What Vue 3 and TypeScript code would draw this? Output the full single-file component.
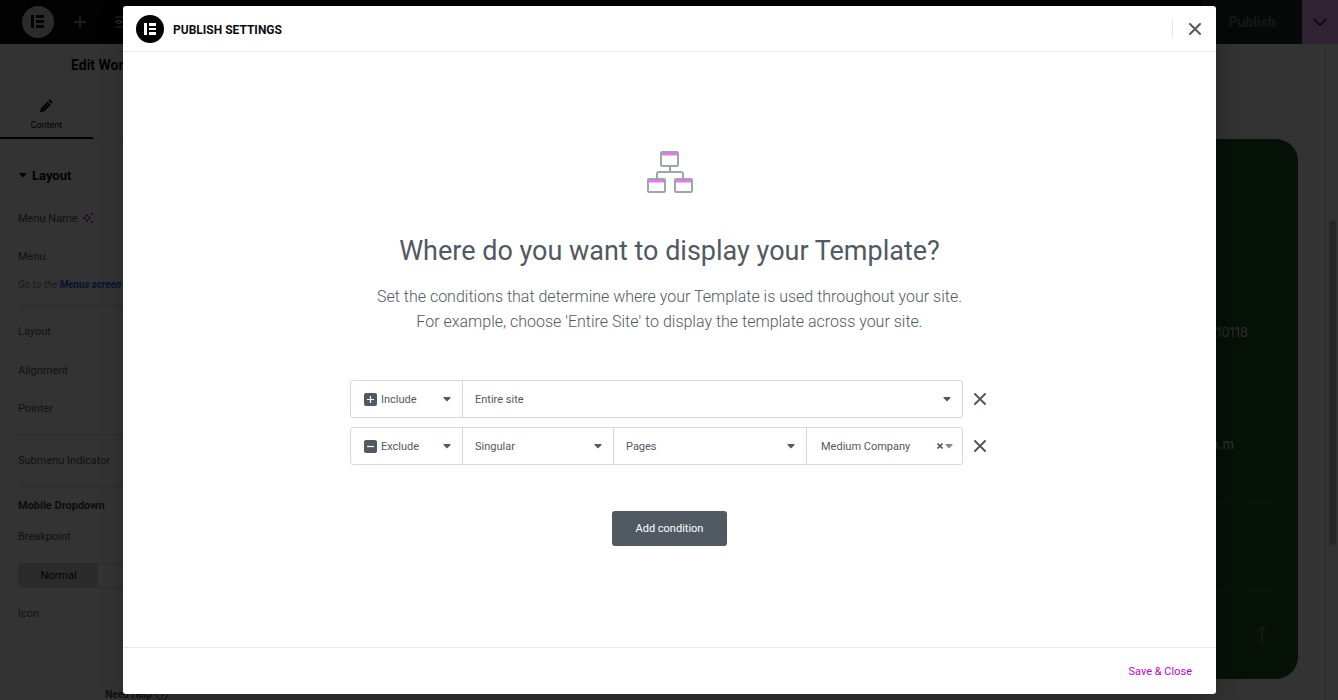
<script setup lang="ts">
import { ref } from 'vue'

interface Field {
  label: string
  options: string[]
  size: string
  clearable?: boolean
}
interface Condition {
  id: number
  kind: 'Include' | 'Exclude'
  fields: Field[]
}

const conditions = ref<Condition[]>([
  {
    id: 1,
    kind: 'Include',
    fields: [{ label: 'Scope', options: ['Entire site', 'Archives', 'Singular'], size: 'wide' }],
  },
  {
    id: 2,
    kind: 'Exclude',
    fields: [
      { label: 'Scope', options: ['Singular', 'Archives', 'Entire site'], size: 'small' },
      { label: 'Content type', options: ['Pages', 'Posts'], size: 'medium' },
      { label: 'Item', options: ['Medium Company'], size: 'item', clearable: true },
    ],
  },
])

let nextId = 3
function addCondition() {
  conditions.value.push({
    id: nextId++,
    kind: 'Include',
    fields: [{ label: 'Scope', options: ['Entire site', 'Archives', 'Singular'], size: 'wide' }],
  })
}
function removeCondition(id: number) {
  conditions.value = conditions.value.filter((c) => c.id !== id)
}
</script>

<template>
  <div class="app">
    <div class="editor">
      <header class="topbar">
        <div class="tools">
          <button class="brand" aria-label="Menu">
            <svg viewBox="0 0 32 32" width="32" height="32">
              <circle cx="16" cy="16" r="16" fill="#d5d8dc" />
              <path d="M9 9h3v13H9zM14 9h8v3h-8zM14 14h8v3h-8zM14 19h8v3h-8z" fill="#0c0d0e" />
            </svg>
          </button>
          <button aria-label="Add element">
            <svg viewBox="0 0 14 14" width="14" height="14" stroke="#babfc5" stroke-width="1.3"><path d="M7 1v12M1 7h12" /></svg>
          </button>
          <button class="site" aria-label="Site settings">
            <svg viewBox="0 0 14 14" width="14" height="14" fill="none" stroke="#babfc5" stroke-width="1.2">
              <path d="M0 2h8M12 2h2M0 7h2M6 7h8M0 12h8M12 12h2" /><circle cx="10" cy="2" r="1.7" /><circle cx="4" cy="7" r="1.7" /><circle cx="10" cy="12" r="1.7" />
            </svg>
          </button>
        </div>
        <div class="publish">
          <button class="publish-main">Publish</button>
          <button class="publish-more" aria-label="Save options">
            <svg viewBox="0 0 14 8" width="14" height="8" fill="none" stroke="#000" stroke-width="1.3"><path d="M1 1l6 6 6-6" /></svg>
          </button>
        </div>
      </header>

      <div class="workspace">
        <aside class="panel">
          <h2 class="panel-title">Edit WordPress Menu</h2>
          <nav class="tabs">
            <button class="tab active">
              <svg viewBox="0 0 14 14" width="14" height="14">
                <path d="M1 13l1-4 6.500-6.500 3.500 3.500L5 12.500zM9.200 1.800l.8-.8q1-.8 2 0l1 1q.8 1 0 2l-.8.8z" fill="#0c0d0e" />
                <path d="M4 10l5-5" stroke="#fff" stroke-width=".5" />
              </svg>
              <span>Content</span>
            </button>
            <button class="tab"><span>Style</span></button>
            <button class="tab"><span>Advanced</span></button>
          </nav>
          <section class="controls">
            <h3 class="section-title">
              <svg viewBox="0 0 8 5" width="8" height="5"><path d="M1 0h6q1 .3.5 1L4 4.500.5 1Q0 .3 1 0z" fill="#0c0d0e" /></svg>Layout
            </h3>
            <div class="row">
              Menu Name
              <svg viewBox="0 0 12 12" width="12" height="12" fill="none" stroke="#c00bb9">
                <path d="M5 2l1.200 2.800L9 6 6.200 7.200 5 10 3.800 7.200 1 6l2.800-1.200z" stroke-width="1" />
                <path d="M10 1v2M9 2h2M10 9v2M9 10h2" stroke-width="1" />
              </svg>
            </div>
            <div class="row">Menu</div>
            <p class="hint">Go to the <a href="#menus">Menus screen</a> to manage your menus.</p>
            <hr />
            <div class="row first">Layout</div>
            <div class="row">Alignment</div>
            <div class="row">Pointer</div>
            <hr />
            <div class="row first">Submenu Indicator</div>
            <hr class="tight" />
            <div class="row strong">Mobile Dropdown</div>
            <div class="row short">Breakpoint</div>
            <div class="segments"><button class="on">Normal</button><button></button></div>
            <div class="row">Icon</div>
          </section>
          <a class="help" href="#help">
            Need Help
            <svg viewBox="0 0 12 12" width="12" height="12" fill="none" stroke="#3f444b">
              <circle cx="6" cy="6" r="5.300" /><path d="M4.500 5q0-1.700 1.500-1.700T7.500 5Q7.500 5.800 6 6.500V7.500M6 8.500v1" />
            </svg>
          </a>
        </aside>
        <main class="canvas">
          <div class="card">
            <p class="address">New York, NY 10118</p>
            <p class="hours">9 a.m - 6 p.m</p>
            <hr />
            <hr class="second" />
            <svg class="up" viewBox="0 0 10 17" width="10" height="17" fill="none" stroke="#c9a13a"><path d="M5 17V1M1 5l4-4 4 4" /></svg>
          </div>
          <div class="scroll"><div class="thumb"></div></div>
        </main>
      </div>
    </div>

    <div class="overlay">
      <div class="dialog" role="dialog" aria-modal="true" aria-labelledby="dialog-title">
        <header class="dialog-head">
          <svg viewBox="0 0 28 28" width="28" height="28">
            <circle cx="14" cy="14" r="14" fill="#000" />
            <path d="M8 8h3v12H8zM13 8h7v3h-7zM13 13h7v2h-7zM13 17h7v3h-7z" fill="#fff" />
          </svg>
          <h1 id="dialog-title">PUBLISH SETTINGS</h1>
          <button class="close" aria-label="Close">
            <svg viewBox="0 0 12 12" width="12" height="12" stroke="#515962" stroke-width="2" stroke-linecap="round"><path d="M1 1l10 10M11 1L1 11" /></svg>
          </button>
        </header>

        <div class="dialog-body">
          <svg class="hero" viewBox="0 0 46 43" width="46" height="43" fill="none" stroke="#9da5ae" stroke-width="2">
            <path d="M15 3h16M2 30h15M29 30h15" stroke="#ed73f5" stroke-width="3" />
            <rect x="14" y="1" width="17" height="14" rx="1" />
            <rect x="1" y="28" width="17" height="13" rx="1" />
            <rect x="28" y="28" width="17" height="13" rx="1" />
            <path d="M23 15v6M10 28v-5q0-2 2-2h22q2 0 2 2v5" />
          </svg>
          <h2>Where do you want to display your Template?</h2>
          <p class="lead">
            Set the conditions that determine where your Template is used throughout your site.<br />
            For example, choose 'Entire Site' to display the template across your site.
          </p>

          <div class="conditions">
            <div v-for="c in conditions" :key="c.id" class="condition">
              <div class="fields">
                <div class="field kind">
                  <svg viewBox="0 0 13 13" width="13" height="13">
                    <rect width="13" height="13" rx="2" fill="#515962" />
                    <path :d="c.kind === 'Include' ? 'M3 6.500h7M6.500 3v7' : 'M3 6.500h7'" stroke="#fff" stroke-width="1.200" />
                  </svg>
                  <select v-model="c.kind" aria-label="Condition type">
                    <option>Include</option>
                    <option>Exclude</option>
                  </select>
                  <svg class="arrow" viewBox="0 0 8 5" width="8" height="5"><path d="M1 0h6q1 .3.5 1L4 4.500.5 1Q0 .3 1 0z" /></svg>
                </div>
                <div v-for="f in c.fields" :key="f.label" class="field" :class="f.size">
                  <select :aria-label="f.label">
                    <option v-for="o in f.options" :key="o">{{ o }}</option>
                  </select>
                  <button v-if="f.clearable" class="clear" aria-label="Clear">
                    <svg viewBox="0 0 6 6" width="6" height="6" stroke="#515962" stroke-width="1.600"><path d="M.5.5l5 5M5.500.5l-5 5" /></svg>
                  </button>
                  <svg class="arrow" viewBox="0 0 8 5" width="8" height="5"><path d="M1 0h6q1 .3.5 1L4 4.500.5 1Q0 .3 1 0z" /></svg>
                </div>
              </div>
              <button class="remove" aria-label="Remove condition" @click="removeCondition(c.id)">
                <svg viewBox="0 0 12 12" width="12" height="12" stroke="#515962" stroke-width="2" stroke-linecap="round"><path d="M1 1l10 10M11 1L1 11" /></svg>
              </button>
            </div>
          </div>

          <button class="add" @click="addCondition">Add condition</button>
        </div>

        <footer class="dialog-foot"><button class="save">Save &amp; Close</button></footer>
      </div>
    </div>
  </div>
</template>

<style>
body {
  overflow: hidden;
}
</style>

<style scoped>
.app {
  position: relative;
  height: 100vh;
  overflow: hidden;
  font-family: Roboto, "Liberation Sans", sans-serif;
  font-size: 11px;
  color: #515962;
}
.app *,
.app {
  box-sizing: border-box;
}
button,
select {
  font: inherit;
  color: inherit;
  background: none;
  border: 0;
  padding: 0;
  margin: 0;
}
svg {
  display: block;
  flex: none;
}
h1,
h2,
h3,
p {
  margin: 0;
}
hr {
  margin: 0;
  border: 0;
  border-top: 1px solid #d5d8dc;
}
.editor {
  display: flex;
  flex-direction: column;
  height: 100%;
}
.topbar {
  display: flex;
  justify-content: space-between;
  height: 44px;
  background: #0c0d0e;
}
.tools {
  display: flex;
  align-items: center;
  gap: 20px;
  padding-left: 22px;
}
.brand {
  margin-right: -1px;
}
.site {
  margin-left: 8px;
}
.publish {
  display: flex;
}
.publish-main {
  width: 100px;
  background: #262829;
  color: #69727d;
  font-size: 14px;
  font-weight: 700;
}
.publish-more {
  display: grid;
  place-items: center;
  width: 36px;
  background: #f0abfc;
}
.workspace {
  flex: 1;
  display: flex;
  min-height: 0;
}
.panel {
  display: flex;
  flex-direction: column;
  width: 278px;
  background: #fff;
}
.panel-title {
  height: 43px;
  line-height: 43px;
  padding-left: 71px;
  border-bottom: 1px solid #f1f2f3;
  font-size: 14px;
  font-weight: 700;
  color: #0c0d0e;
}
.tabs {
  display: flex;
  height: 53px;
  border-bottom: 1px solid #e6e8ea;
}
.tab {
  flex: 1;
  display: flex;
  flex-direction: column;
  align-items: center;
  justify-content: center;
  gap: 7px;
  padding-top: 5px;
  font-size: 9px;
}
.tab.active {
  border-bottom: 2px solid #0c0d0e;
  color: #0c0d0e;
}
.controls {
  flex: 1;
  padding-left: 18px;
}
.section-title {
  display: flex;
  align-items: center;
  gap: 5px;
  height: 60px;
  margin-top: 5px;
  padding-left: 1px;
  font-size: 13px;
  font-weight: 700;
  color: #0c0d0e;
}
.row {
  display: flex;
  align-items: center;
  gap: 4px;
  height: 38px;
}
.section-title + .row {
  margin-top: -6px;
}
.row.first {
  height: 39px;
  margin-top: 6px;
}
.row + hr {
  margin-top: 7px;
}
.row + .tight {
  margin-top: 6px;
}
.hint {
  height: 30px;
  line-height: 20px;
  font-size: 10px;
  font-style: italic;
  white-space: nowrap;
  color: #818a96;
}
.hint a {
  color: #2563eb;
  font-weight: 700;
  text-decoration: none;
}
.row.strong {
  height: 36px;
  font-weight: 700;
  color: #3f444b;
}
.row.short {
  height: 27px;
}
.segments {
  display: flex;
  height: 25px;
  width: 160px;
  margin: 13px 0 6px;
  border: 1px solid #d5d8dc;
  border-radius: 3px;
}
.segments button {
  flex: 1;
}
.segments .on {
  background: #d5d8dc;
  color: #0c0d0e;
}
.help {
  display: flex;
  align-items: center;
  justify-content: center;
  gap: 4px;
  height: 11px;
  padding-right: 5px;
  font-size: 10px;
  font-weight: 500;
  color: #3f444b;
  text-decoration: none;
}
.canvas {
  flex: 1;
  display: flex;
  justify-content: flex-end;
  background: #fff;
}
.card {
  flex: 1;
  display: flex;
  flex-direction: column;
  margin: 95px 27px 21px 40px;
  padding: 0 26px;
  border-radius: 22px;
  background: #1e5528;
  color: #d5d8dc;
  font-family: Inter, Roboto, sans-serif;
  font-size: 13px;
  line-height: 16px;
  text-align: right;
}
.address {
  padding: 185px 24px 0 0;
}
.hours {
  padding: 96px 38px 0 0;
  font-weight: 500;
}
.card hr {
  margin-top: 49px;
  border-color: #3f7048;
}
.card .second {
  margin-top: 87px;
}
.up {
  margin: 36px 5px 0 auto;
}
.scroll {
  width: 13px;
  border-left: 1px solid #e6e8ea;
  padding: 176px 2px 0 3px;
}
.thumb {
  height: 325px;
  border-radius: 4px;
  background: #c2c2c2;
}
.overlay {
  position: absolute;
  inset: 0;
  display: flex;
  padding: 6px 122px 6px 123px;
  background: rgba(0, 0, 0, 0.8);
}
.dialog {
  flex: 1;
  display: flex;
  flex-direction: column;
  border-radius: 3px;
  background: #fff;
  box-shadow: 2px 8px 23px 3px rgba(0, 0, 0, 0.2);
}
.dialog-head {
  display: flex;
  align-items: center;
  height: 46px;
  padding: 0 15px 0 13px;
  border-bottom: 1px solid #e6e8ea;
}
.dialog-head h1 {
  margin-left: 9px;
  line-height: 16px;
  padding-top: 2px;
  font-size: 12px;
  font-weight: 700;
  color: #0c0d0e;
}
.close {
  display: grid;
  place-items: center end;
  width: 29px;
  height: 18px;
  margin-left: auto;
  border-left: 1px solid #e6e8ea;
}
.dialog-body {
  flex: 1;
  display: flex;
  flex-direction: column;
  align-items: center;
  padding: 99px 24px 0;
}
.dialog-body h2 {
  margin-top: 39px;
  line-height: 36px;
  font-size: 27px;
  font-weight: 400;
}
.lead {
  margin-top: 15px;
  line-height: 25px;
  font-size: 16px;
  font-weight: 300;
  text-align: center;
}
.conditions {
  display: flex;
  flex-direction: column;
  gap: 9px;
  width: 100%;
  max-width: 639px;
  margin-top: 46px;
}
.condition {
  display: flex;
}
.fields {
  flex: 1;
  display: flex;
  height: 38px;
  border: 1px solid #d5d8dc;
  border-radius: 3px;
}
.field {
  display: flex;
  align-items: center;
  padding: 0 11px 0 12px;
}
.field + .field {
  border-left: 1px solid #d5d8dc;
}
.kind {
  width: 111px;
  gap: 4px;
  padding-left: 13px;
}
.small {
  width: 151px;
}
.medium {
  width: 193px;
}
.wide,
.item {
  flex: 1;
}
.item {
  padding: 0 9px 0 14px;
}
select {
  flex: 1;
  min-width: 0;
  height: 100%;
  appearance: none;
}
.arrow {
  fill: #515962;
}
.item .arrow {
  margin-left: 2px;
  fill: #888;
}
.remove {
  display: flex;
  align-items: center;
  justify-content: flex-end;
  width: 26px;
  padding-right: 3px;
}
.add {
  width: 115px;
  height: 35px;
  margin-top: 46px;
  border-radius: 3px;
  background: #515962;
  color: #fff;
}
.dialog-foot {
  display: flex;
  align-items: center;
  justify-content: flex-end;
  height: 47px;
  padding-right: 24px;
  border-top: 1px solid #e6e8ea;
}
.save {
  color: #c800cf;
}
</style>
